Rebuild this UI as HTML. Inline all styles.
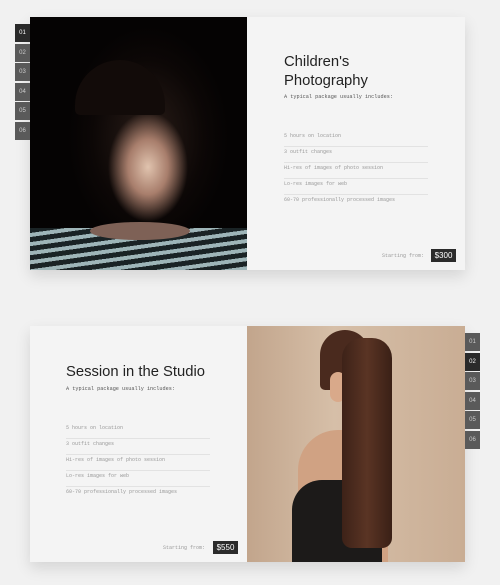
<!DOCTYPE html>
<html><head><style>
*{margin:0;padding:0;box-sizing:border-box}
body{width:500px;height:585px;background:#f1f1f1;position:relative;overflow:hidden;font-family:"Liberation Sans",sans-serif}
.card{position:absolute;background:#f4f4f4;box-shadow:0 6px 14px rgba(0,0,0,.12)}
.img{position:absolute}
.tabs{position:absolute;width:15px}
.tabs div{height:18px;margin-bottom:1.5px;background:#5a5a5a;color:#ccc;font-size:6px;line-height:18px;text-align:center}
.tabs div.a{background:#2a2a2a;color:#fff}
.t{position:absolute;font-size:14.8px;color:#222;line-height:19px}
.s{position:absolute;font-family:"Liberation Mono",monospace;font-size:5.2px;color:#555}
.li{position:absolute;width:144px;font-family:"Liberation Mono",monospace;font-size:5px;color:#999;border-bottom:1px solid #e2e2e2;height:16px;line-height:10px}
.li.l{border:none}
.pr{position:absolute;font-family:"Liberation Mono",monospace;font-size:5px;color:#999}
.bx{position:absolute;background:#2b2b2b;color:#fff;font-size:8px;width:25px;height:13px;line-height:13px;text-align:center}
</style></head><body>
<div class="card" style="left:30px;top:17px;width:435px;height:253px"></div>
<div class="img" style="left:30px;top:17px;width:217px;height:253px;background:radial-gradient(ellipse 40px 55px at 118px 150px,#e0c3ae 0%,#a87e6c 50%,rgba(40,25,20,0) 100%),radial-gradient(ellipse 80px 110px at 118px 120px,#2a1d18 0%,#0c0706 70%,#050303 100%)"></div>
<div style="position:absolute;left:75px;top:60px;width:90px;height:55px;border-radius:45px 45px 5px 5px;background:#120b09"></div>
<div style="position:absolute;left:30px;top:228px;width:217px;height:42px;background:repeating-linear-gradient(172deg,#1a2325 0 5px,#9eb5b8 5px 9px)"></div>
<div style="position:absolute;left:90px;top:222px;width:100px;height:18px;border-radius:50%;background:#7e6156"></div>
<div class="tabs" style="left:15px;top:24px"><div class="a">01</div><div>02</div><div>03</div><div>04</div><div>05</div><div>06</div></div>
<div class="t" style="left:284px;top:53px">Children's<br>Photography</div>
<div class="s" style="left:284px;top:94px">A typical package usually includes:</div>
<div class="li" style="left:284px;top:131px">5 hours on location</div>
<div class="li" style="left:284px;top:147px">3 outfit changes</div>
<div class="li" style="left:284px;top:163px">Hi-res of images of photo session</div>
<div class="li" style="left:284px;top:179px">Lo-res images for web</div>
<div class="li l" style="left:284px;top:195px">60-70 professionally processed images</div>
<div class="pr" style="left:382px;top:253px">Starting from:</div>
<div class="bx" style="left:431px;top:249px">$300</div>

<div class="card" style="left:30px;top:326px;width:435px;height:236px"></div>
<div class="img" style="left:247px;top:326px;width:218px;height:236px;background:linear-gradient(90deg,#c2a58c,#d6bfa8 40%,#c9ad94)"></div>
<div style="position:absolute;left:320px;top:330px;width:50px;height:60px;border-radius:25px 25px 5px 5px;background:#4a2a1e"></div>
<div style="position:absolute;left:298px;top:430px;width:90px;height:132px;border-radius:40px 40px 0 0;background:#d0a283"></div>
<div style="position:absolute;left:292px;top:480px;width:90px;height:82px;background:#1c1a19;border-radius:30px 10px 0 0"></div>
<div style="position:absolute;left:330px;top:372px;width:16px;height:30px;border-radius:8px;background:#d9a98a"></div>
<div style="position:absolute;left:342px;top:338px;width:50px;height:210px;border-radius:20px 20px 10px 10px;background:linear-gradient(90deg,#3d2218,#5a3424,#3a2016)"></div>
<div class="tabs" style="left:465px;top:333px"><div>01</div><div class="a">02</div><div>03</div><div>04</div><div>05</div><div>06</div></div>
<div class="t" style="left:66px;top:363px">Session in the Studio</div>
<div class="s" style="left:66px;top:386px">A typical package usually includes:</div>
<div class="li" style="left:66px;top:423px">5 hours on location</div>
<div class="li" style="left:66px;top:439px">3 outfit changes</div>
<div class="li" style="left:66px;top:455px">Hi-res of images of photo session</div>
<div class="li" style="left:66px;top:471px">Lo-res images for web</div>
<div class="li l" style="left:66px;top:487px">60-70 professionally processed images</div>
<div class="pr" style="left:163px;top:545px">Starting from:</div>
<div class="bx" style="left:213px;top:541px">$550</div>
</body></html>
